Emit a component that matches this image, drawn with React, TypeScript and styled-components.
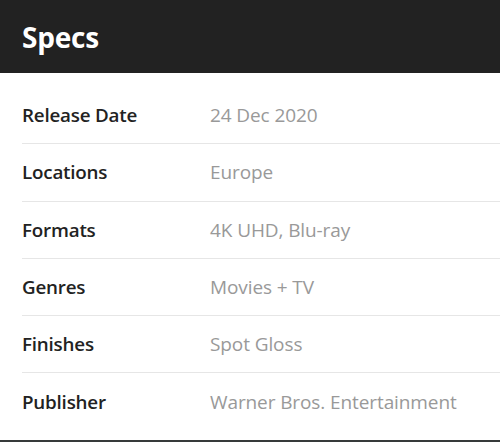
import React from "react";
import styled, { createGlobalStyle } from "styled-components";

const Global = createGlobalStyle`
  html, body { margin: 0; padding: 0; background: #ffffff; }
  body { font-family: "Open Sans", "Liberation Sans", sans-serif; }
`;

const Panel = styled.section`
  width: 500px;
  height: 442px;
  box-sizing: border-box;
  display: flex;
  flex-direction: column;
  border-bottom: 2px solid #363a3a;
  background: #fff;
`;

const Header = styled.header`
  height: 73px;
  flex-shrink: 0;
  background: #222222;
  display: flex;
  align-items: center;
  padding: 0 22px;
`;

const Title = styled.h2`
  margin: 0;
  color: #ffffff;
  font-size: 28px;
  font-weight: 700;
  letter-spacing: -0.2px;
`;

const List = styled.dl`
  margin: 0;
  padding: 14px 0 0 22px;
  display: flex;
  flex-direction: column;
`;

const Row = styled.div<{ $last?: boolean }>`
  display: grid;
  grid-template-columns: 188px 1fr;
  align-items: center;
  height: 57.25px;
  box-sizing: border-box;
  border-bottom: ${(p) => (p.$last ? "none" : "1px solid #e6e6e6")};
`;

const Label = styled.dt`
  margin: 0;
  font-size: 18.8px;
  font-weight: 600;
  color: #222222;
  letter-spacing: -0.2px;
`;

const Value = styled.dd`
  margin: 0;
  font-size: 19px;
  font-weight: 400;
  color: #999999;
  letter-spacing: -0.1px;
`;

const specs: [string, string][] = [
  ["Release Date", "24 Dec 2020"],
  ["Locations", "Europe"],
  ["Formats", "4K UHD, Blu-ray"],
  ["Genres", "Movies + TV"],
  ["Finishes", "Spot Gloss"],
  ["Publisher", "Warner Bros. Entertainment"],
];

export default function App() {
  return (
    <>
      <Global />
      <Panel>
        <Header>
          <Title>Specs</Title>
        </Header>
        <List>
          {specs.map(([k, v], i) => (
            <Row key={k} $last={i === specs.length - 1}>
              <Label>{k}</Label>
              <Value>{v}</Value>
            </Row>
          ))}
        </List>
      </Panel>
    </>
  );
}
